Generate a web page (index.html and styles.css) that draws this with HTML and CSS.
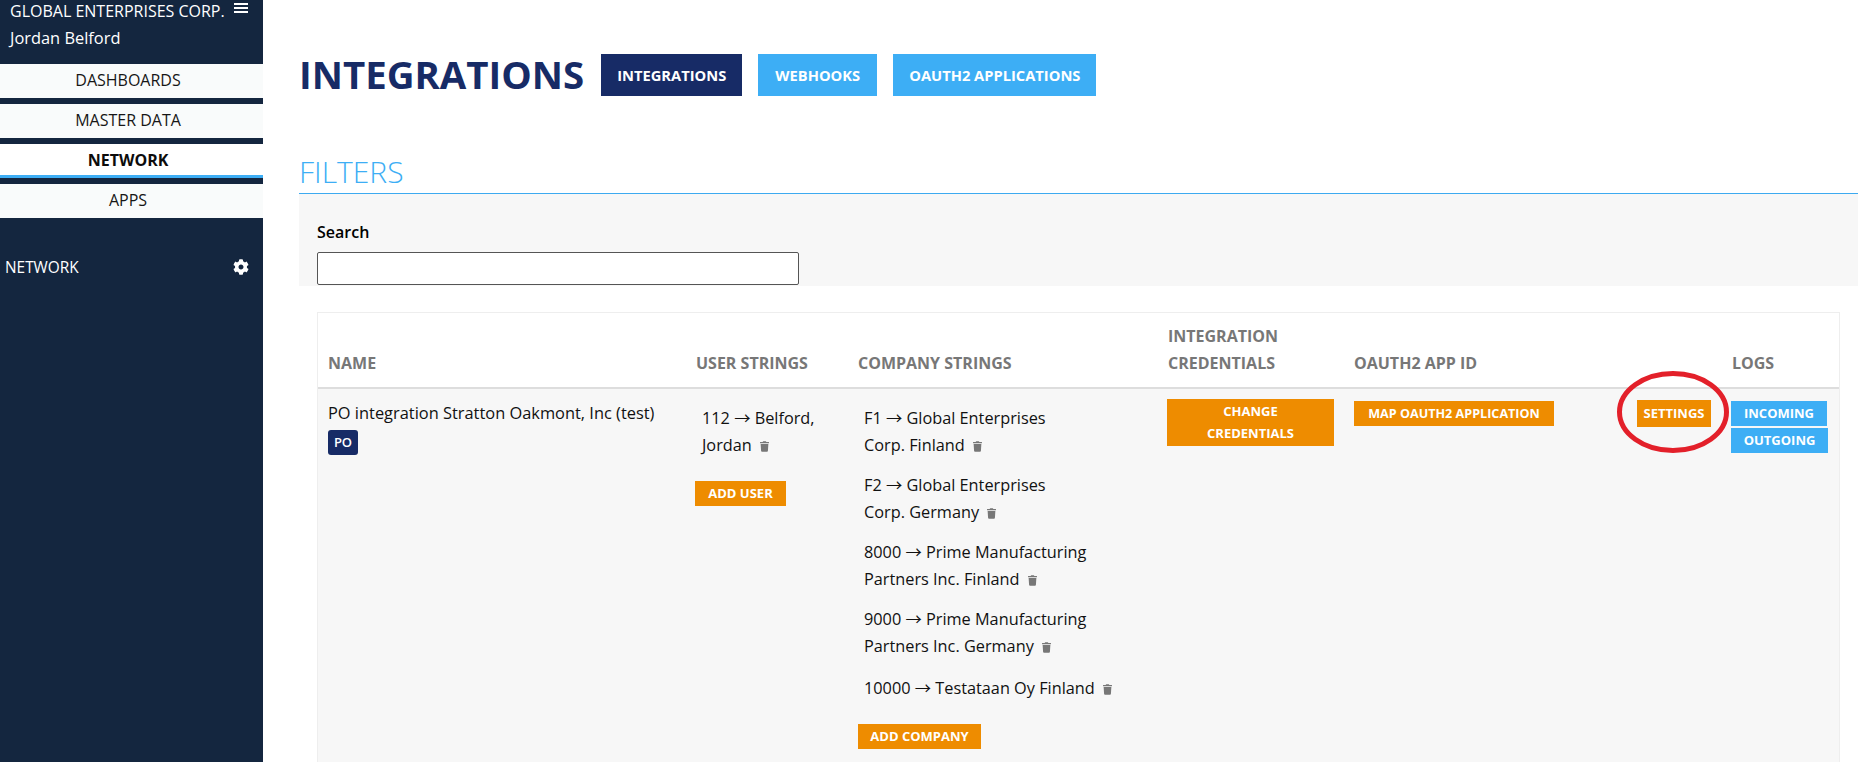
FILE: index.html
```html
<!DOCTYPE html>
<html lang="en">
<head>
<meta charset="utf-8">
<title>Integrations</title>
<link rel="stylesheet" href="styles.css">
</head>
<body>
<svg class="defs" width="0" height="0" aria-hidden="true">
  <symbol id="trash" viewBox="0 0 448 512"><path d="M432 32H312l-9.4-18.7A24 24 0 0 0 281.1 0H166.8a23.72 23.72 0 0 0-21.4 13.3L136 32H16A16 16 0 0 0 0 48v32a16 16 0 0 0 16 16h416a16 16 0 0 0 16-16V48a16 16 0 0 0-16-16zM53.2 467a48 48 0 0 0 47.9 45h245.8a48 48 0 0 0 47.9-45L416 128H32z"/></symbol>
</svg>
<div class="app">
  <aside class="sidebar">
    <div class="brand">
      <div class="brand-row"><span>GLOBAL ENTERPRISES CORP.</span>
        <svg class="burger" viewBox="0 0 14 10"><path d="M0 0h14v2H0zM0 4h14v2H0zM0 8h14v2H0z"/></svg>
      </div>
      <div class="user-name">Jordan Belford</div>
    </div>
    <nav class="nav">
      <a class="nav-item">DASHBOARDS</a>
      <a class="nav-item">MASTER DATA</a>
      <a class="nav-item active">NETWORK</a>
      <a class="nav-item">APPS</a>
    </nav>
    <div class="side-section">
      <span class="side-label">NETWORK</span>
      <svg class="gear" viewBox="0 0 512 512"><path d="M487.4 315.7l-42.6-24.6c4.3-23.2 4.3-47 0-70.2l42.6-24.6c4.9-2.8 7.1-8.6 5.5-14-11.1-35.6-30-67.8-54.7-94.6-3.8-4.1-10-5.1-14.8-2.3L380.8 110c-17.9-15.4-38.5-27.3-60.8-35.1V25.8c0-5.6-3.9-10.5-9.4-11.7-36.7-8.2-74.3-7.8-109.2 0-5.5 1.2-9.4 6.1-9.4 11.7V75c-22.2 7.9-42.8 19.8-60.8 35.1L88.7 85.5c-4.9-2.8-11-1.9-14.8 2.3-24.7 26.7-43.6 58.9-54.7 94.6-1.7 5.4.6 11.2 5.5 14L67.3 221c-4.3 23.2-4.3 47 0 70.2l-42.6 24.6c-4.9 2.8-7.1 8.6-5.5 14 11.1 35.6 30 67.8 54.7 94.6 3.8 4.1 10 5.1 14.8 2.3l42.6-24.6c17.9 15.4 38.5 27.3 60.8 35.1v49.2c0 5.6 3.9 10.5 9.4 11.7 36.7 8.2 74.3 7.8 109.2 0 5.5-1.2 9.4-6.1 9.4-11.7v-49.2c22.2-7.9 42.8-19.8 60.8-35.1l42.6 24.6c4.9 2.8 11 1.9 14.8-2.3 24.7-26.7 43.6-58.9 54.7-94.6 1.5-5.5-.7-11.3-5.6-14.1zM256 336c-44.1 0-80-35.9-80-80s35.9-80 80-80 80 35.9 80 80-35.9 80-80 80z"/></svg>
    </div>
  </aside>
  <main class="main">
    <header class="page-head">
      <h1 class="title">INTEGRATIONS</h1>
      <div class="tabs">
        <a class="tab current">INTEGRATIONS</a>
        <a class="tab hooks">WEBHOOKS</a>
        <a class="tab">OAUTH2 APPLICATIONS</a>
      </div>
    </header>
    <h2 class="filters-title">FILTERS</h2>
    <section class="filters">
      <label class="search-label" for="search">Search</label>
      <input class="search-input" id="search" type="text">
    </section>
    <div class="table-wrap">
      <table class="grid">
        <colgroup>
          <col class="c-name"><col class="c-user"><col class="c-company"><col class="c-cred"><col class="c-oauth"><col class="c-settings"><col class="c-logs">
        </colgroup>
        <thead>
          <tr>
            <th class="first">NAME</th>
            <th>USER STRINGS</th>
            <th>COMPANY STRINGS</th>
            <th>INTEGRATION CREDENTIALS</th>
            <th>OAUTH2 APP ID</th>
            <th></th>
            <th>LOGS</th>
          </tr>
        </thead>
        <tbody>
          <tr>
            <td class="first">
              <div>PO integration Stratton Oakmont, Inc (test)</div>
              <span class="badge">PO</span>
            </td>
            <td>
              <ul class="strings">
                <li>112 → Belford, Jordan <svg class="trash"><use href="#trash"/></svg></li>
              </ul>
              <a class="btn orange add-user">ADD USER</a>
            </td>
            <td>
              <ul class="strings">
                <li>F1 → Global Enterprises<br>Corp. Finland <svg class="trash"><use href="#trash"/></svg></li>
                <li>F2 → Global Enterprises<br>Corp. Germany <svg class="trash"><use href="#trash"/></svg></li>
                <li>8000 → Prime Manufacturing<br>Partners Inc. Finland <svg class="trash"><use href="#trash"/></svg></li>
                <li>9000 → Prime Manufacturing<br>Partners Inc. Germany <svg class="trash"><use href="#trash"/></svg></li>
                <li class="last">10000 → Testataan Oy Finland <svg class="trash"><use href="#trash"/></svg></li>
              </ul>
              <a class="btn orange add-company">ADD COMPANY</a>
            </td>
            <td class="cell-tight"><a class="btn orange wide">CHANGE CREDENTIALS</a></td>
            <td class="cell-btn"><a class="btn orange map">MAP OAUTH2 APPLICATION</a></td>
            <td class="cell-btn settings-cell">
              <a class="btn orange settings">SETTINGS</a>
              <svg class="circle" viewBox="0 0 112 82"><ellipse cx="56" cy="41" rx="53.5" ry="38.5"/></svg>
            </td>
            <td class="cell-btn logs">
              <a class="btn blue">INCOMING</a>
              <a class="btn blue">OUTGOING</a>
            </td>
          </tr>
        </tbody>
      </table>
    </div>
  </main>
</div>
</body>
</html>
```
FILE: styles.css
```css
* { box-sizing: border-box; }
html, body { margin: 0; height: 762px; overflow: hidden; background: #fff; }
body { font-family: "Open Sans", "Noto Sans CJK JP", sans-serif; font-size: 16px; line-height: 27px; color: #111; }
.defs { position: absolute; }
.app { display: flex; height: 762px; }

.sidebar { width: 263px; flex: none; background: #14263f; color: #fff; }
.brand { height: 66px; margin-top: -2px; padding: 0 10px; }
.brand-row { display: flex; align-items: center; justify-content: space-between; white-space: nowrap; padding-right: 5px; }
.user-name { font-size: 16.4px; line-height: 25px; }
.burger { width: 14px; height: 10px; fill: #fff; margin-bottom: 8px; }
.nav { display: flex; flex-direction: column; gap: 6px; }
.nav-item { display: block; height: 34px; line-height: 33px; text-align: center; background: #f9fbfb; color: #161616; padding-right: 7px; }
.nav-item.active { background: #fff; font-weight: 700; color: #0c0c0c; border-bottom: 3px solid #3daef5; }
.side-section { display: flex; justify-content: space-between; align-items: center; font-size: 15.4px; margin-top: 35px; padding: 0 14px 0 5px; }
.side-label { padding-top: 1px; }
.gear { width: 16px; height: 16px; fill: #fff; }

.main { flex: 1; min-width: 0; padding: 54px 8px 0 36px; }
.page-head { display: flex; align-items: center; gap: 17px; height: 42px; }
.title { margin: 0; font-size: 38.4px; line-height: 40px; padding-bottom: 2px; font-weight: 700; color: #172b66; white-space: nowrap; }
.tabs { display: flex; gap: 16px; }
.tab { display: flex; align-items: center; justify-content: center; height: 42px; padding: 0 16px; background: #3daef5; color: #fff; font-size: 14.7px; font-weight: 700; white-space: nowrap; }
.tab.current { background: #172b66; }
.tab.hooks { width: 119px; }
.filters-title { margin: 56px 0 0; height: 42px; line-height: 39px; font-size: 30px; font-weight: 300; color: #3daef5; border-bottom: 1px solid #3daaf0; }
.filters { height: 92px; background: #f7f7f7; padding: 25px 0 0 18px; }
.search-label { display: block; font-weight: 600; font-size: 16px; color: #000; }
.search-input { display: block; margin-top: 6px; width: 482px; height: 33px; border: 1px solid #555; border-radius: 2px; background: #fff; padding: 0 8px; }

.table-wrap { margin: 26px 18px 0 18px; border: 1px solid #eee; border-bottom: 0; width: 1523px; }
.grid { border-collapse: collapse; table-layout: fixed; width: 100%; }
.c-name { width: 367px; }
.c-user { width: 162px; }
.c-company { width: 310px; }
.c-cred { width: 186px; }
.c-oauth { width: 283px; }
.c-settings { width: 95px; }
.c-logs { width: 118px; }
th { text-align: left; vertical-align: bottom; padding: 10px 11px; color: #777; font-size: 16px; font-weight: 700; border-bottom: 2px solid #ddd; }
td { vertical-align: top; background: #f7f7f7; padding: 10px 11px; height: 400px; font-size: 16.4px; }
th.first, td.first { padding-left: 10px; }
.badge { display: inline-block; margin-top: 4px; width: 30px; height: 25px; line-height: 25px; text-align: center; background: #172b66; color: #fff; font-size: 13px; font-weight: 600; border-radius: 3px; vertical-align: top; }
.strings { list-style: none; margin: 6px 0 0; padding: 0 0 0 6px; font-size: 16.3px; }
.strings li { margin-bottom: 13px; }
.strings li.last { margin-top: 15px; }
.trash { width: 9px; height: 11px; margin-left: 4px; fill: #777; vertical-align: -1px; }
.btn { display: block; color: #fff; font-size: 13px; font-weight: 700; text-align: center; white-space: nowrap; line-height: 25px; height: 25px; }
.orange { background: #ee8c00; }
.blue { background: #3daef5; }
.add-user { width: 91px; margin: 21.5px 0 0 -1px; }
.add-company { width: 123px; margin-top: 21.5px; }
.cell-tight { padding: 10px 0 0 10px; }
.wide { width: 167px; height: 47px; line-height: 22px; padding: 1px 20px 0; white-space: normal; }
.cell-btn { padding-top: 12px; }
.map { width: 200px; font-size: 12.6px; }
.settings-cell { position: relative; padding: 11px 0 0 11px; }
.settings { width: 74px; height: 27px; line-height: 27px; }
.circle { position: absolute; left: -9px; top: -18px; width: 112px; height: 82px; fill: none; stroke: #e3202a; stroke-width: 5; pointer-events: none; }
.logs { padding-left: 10px; padding-right: 0; }
.logs .btn { width: 96px; margin-bottom: 2px; }
.logs .btn + .btn { width: 97px; }
```
